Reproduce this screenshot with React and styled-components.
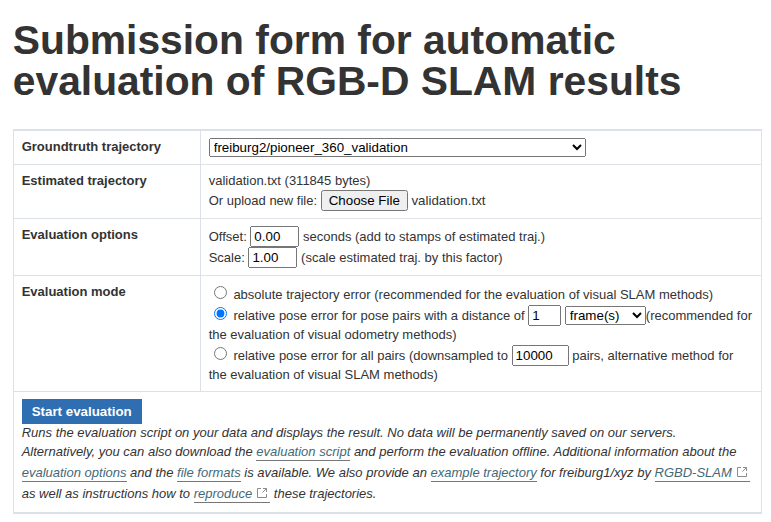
import React from 'react';
import styled, { createGlobalStyle } from 'styled-components';

const sans = '"Liberation Sans", Arial, sans-serif';

const Global = createGlobalStyle`
  body { margin: 0; background: #fff; color: #333; font: 13px/20px ${sans}; overflow: hidden; }
`;
const Page = styled.main`
  padding: 20px 9px 0 13px;
`;
const Title = styled.h1`
  margin: 0 0 27px -0.25px;
  font-size: 40.8px;
  line-height: 41px;
  font-weight: 700;
`;
const Table = styled.table`
  width: 749px;
  table-layout: fixed;
  border-collapse: separate;
  border-spacing: 0;
  border: solid #dce1e9;
  border-width: 2px 1px;
`;
const Row = styled.tr`
  height: ${(p) => p.$h}px;
`;
const Label = styled.th`
  width: 187px;
  box-sizing: border-box;
  padding: 6px 7.7px 0;
  border: solid #dce1e9;
  border-width: 0 1px 1px 0;
  text-align: left;
  vertical-align: top;
`;
const Cell = styled.td`
  box-sizing: border-box;
  padding: ${(p) => p.$top ?? 7}px 7.7px 0;
  border-bottom: ${(p) => (p.$last ? '0' : '1px solid #dfe2e6')};
  vertical-align: top;
`;
const Line = styled.div`
  height: ${(p) => p.$h || 20}px;
  line-height: ${(p) => p.$h || 20}px;
  white-space: nowrap;
`;
const Select = styled.select`
  width: ${(p) => p.$w}px;
  height: 19px;
  font: 13.33px ${sans};
`;
const Input = styled.input`
  width: ${(p) => p.$w}px;
  height: 21px;
  box-sizing: border-box;
  font: 13.33px ${sans};
`;
const File = styled.button`
  height: 21px;
  padding: 1px 6px;
  font: 13.33px ${sans};
`;
const FileName = styled.span`
  font-size: 13.33px;
`;
const Radio = styled.input`
  margin: 3px 6.7px 3px 5px;
`;
const Start = styled.button`
  display: block;
  width: 120px;
  height: 25px;
  padding: 0;
  border: 0;
  background: #306eb2;
  color: #fff;
  font: bold 13.33px ${sans};
`;
const Notes = styled.em`
  display: block;
`;
const Link = styled.a`
  padding-bottom: 1px;
  color: #436976;
  border-bottom: 1px solid #777;
`;
const Icon = styled.svg`
  width: 10px;
  height: 10px;
  margin: 0 3px 0 5px;
`;
const External = () => (
  <Icon viewBox="0 0 10 10" fill="none" stroke="#8c8c8c">
    <path d="M4 .5H.5v9h9V6M6 .5h3.5V4M9.5.5 5.5 4.5" />
  </Icon>
);

export default function App() {
  return (
    <>
      <Global />
      <Page>
        <Title>Submission form for automatic evaluation of RGB-D SLAM results</Title>
        <Table>
          <tbody>
            <Row $h={34}>
              <Label>Groundtruth trajectory</Label>
              <Cell><Line $h={19}><Select $w={377}><option>freiburg2/pioneer_360_validation</option></Select></Line></Cell>
            </Row>
            <Row $h={54}>
              <Label>Estimated trajectory</Label>
              <Cell $top={6}>
                <Line $h={19}>validation.txt (311845 bytes)</Line>
                <Line>Or upload new file: <File>Choose File</File> <FileName>validation.txt</FileName></Line>
              </Cell>
            </Row>
            <Row $h={57}>
              <Label>Evaluation options</Label>
              <Cell>
                <Line $h={21}>Offset: <Input $w={49} defaultValue="0.00" /> seconds (add to stamps of estimated traj.)</Line>
                <Line $h={21}>Scale: <Input $w={49} defaultValue="1.00" /> (scale estimated traj. by this factor)</Line>
              </Cell>
            </Row>
            <Row $h={116}>
              <Label>Evaluation mode</Label>
              <Cell>
                <Line $h={21}>
                  <Radio type="radio" name="mode" />absolute trajectory error (recommended for the evaluation of visual SLAM methods)
                </Line>
                <Line $h={21}>
                  <Radio type="radio" name="mode" defaultChecked />relative pose error for pose pairs with a distance of <Input $w={33} defaultValue="1" /> <Select $w={81}><option>frame(s)</option></Select>(recommended for
                </Line>
                <Line $h={19}>the evaluation of visual odometry methods)</Line>
                <Line $h={21}>
                  <Radio type="radio" name="mode" />relative pose error for all pairs (downsampled to <Input $w={57} defaultValue="10000" /> pairs, alternative method for
                </Line>
                <Line $h={19}>the evaluation of visual SLAM methods)</Line>
              </Cell>
            </Row>
            <Row $h={120}>
              <Cell colSpan={2} $last>
                <Start>Start evaluation</Start>
                <Notes>
                  <Line $h={17}>Runs the evaluation script on your data and displays the result. No data will be permanently saved on our servers.</Line>
                  <Line $h={21}>Alternatively, you can also download the <Link>evaluation script</Link> and perform the evaluation offline. Additional information about the</Line>
                  <Line $h={21}><Link>evaluation options</Link> and the <Link>file formats</Link> is available. We also provide an <Link>example trajectory</Link> for freiburg1/xyz by <Link>RGBD-SLAM<External /></Link></Line>
                  <Line $h={21}>as well as instructions how to <Link>reproduce<External /></Link> these trajectories.</Line>
                </Notes>
              </Cell>
            </Row>
          </tbody>
        </Table>
      </Page>
    </>
  );
}
